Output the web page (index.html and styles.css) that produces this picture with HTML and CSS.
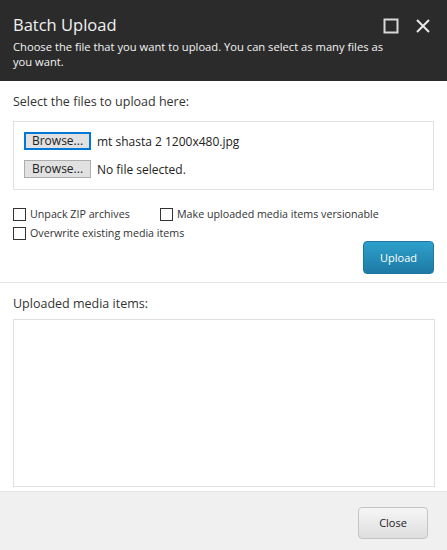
FILE: index.html
```html
<!DOCTYPE html>
<html>
<head>
<meta charset="utf-8">
<link rel="stylesheet" href="styles.css">
</head>
<body>
<div class="dialog">
  <header class="head">
    <div class="head-text">
      <div class="title">Batch Upload</div>
      <div class="subtitle">Choose the file that you want to upload. You can select as many files as you want.</div>
    </div>
    <div class="head-icons">
      <svg class="ico" width="16" height="16" viewBox="0 0 16 16"><rect x="1.5" y="1.5" width="13" height="13" fill="none" stroke="#d8d8d8" stroke-width="2"/></svg>
      <svg class="ico" width="16" height="16" viewBox="0 0 16 16"><path d="M2 2 L14 14 M14 2 L2 14" stroke="#e8e8e8" stroke-width="2" fill="none"/></svg>
    </div>
  </header>
  <main class="body">
    <div class="label">Select the files to upload here:</div>
    <div class="filebox">
      <div class="filerow"><span class="browse focused">Browse...</span><span class="fname">mt shasta 2 1200x480.jpg</span></div>
      <div class="filerow"><span class="browse">Browse...</span><span class="fname">No file selected.</span></div>
    </div>
    <div class="opts">
      <div class="optrow">
        <label class="opt opt-first"><span class="cb"></span>Unpack ZIP archives</label>
        <label class="opt"><span class="cb"></span>Make uploaded media items versionable</label>
      </div>
      <div class="optrow">
        <label class="opt"><span class="cb"></span>Overwrite existing media items</label>
      </div>
    </div>
    <div class="uprow"><span class="upload">Upload</span></div>
  </main>
  <section class="results">
    <div class="label">Uploaded media items:</div>
    <div class="listbox"></div>
  </section>
  <footer class="foot"><span class="close">Close</span></footer>
</div>
</body>
</html>
```
FILE: styles.css
```css
* { box-sizing: border-box; }
html, body { margin: 0; padding: 0; }
body {
  width: 447px;
  height: 550px;
  font-family: "Open Sans", "Liberation Sans", sans-serif;
  color: #2f2f2f;
  background: #fff;
  overflow: hidden;
}
.dialog { display: flex; flex-direction: column; height: 550px; }
.head {
  background: #2b2b2b;
  height: 81px;
  display: flex;
  padding: 12px 16px 0 13px;
  color: #fff;
}
.head-text { flex: 1; min-width: 0; }
.title { font-size: 16.5px; line-height: 26px; color: #f2f2f2; }
.subtitle { font-size: 11.2px; line-height: 15px; margin-top: 1px; width: 385px; color: #f4f4f4; }
.head-icons { display: flex; gap: 16px; padding-top: 6px; padding-right: 0; }
.ico { display: block; }
.body { padding: 12px 13px 0 13px; border-bottom: 1px solid #e4e4e4; height: 202px; }
.label { font-size: 12.5px; line-height: 18px; color: #333; }
.filebox {
  margin-top: 10px;
  border: 1px solid #e0e0e0;
  height: 69px;
  padding: 10px 10px 0 10px;
  display: flex;
  flex-direction: column;
  gap: 10px;
}
.filerow { display: flex; align-items: center; height: 18px; font-size: 12px; }
.browse {
  width: 67px;
  height: 18px;
  border: 1px solid #adadad;
  background: #e1e1e1;
  font-size: 12px;
  line-height: 16px;
  text-align: center;
  color: #222;
}
.browse.focused { border: 2px solid #0078d7; line-height: 14px; }
.fname { margin-left: 6px; color: #222; }
.opts { margin-top: 18px; display: flex; flex-direction: column; gap: 6px; }
.optrow { display: flex; }
.opt { display: flex; align-items: center; font-size: 10.7px; line-height: 13px; color: #333; }
.opt-first { width: 147px; }
.cb { width: 13px; height: 13px; border: 1px solid #333; margin-right: 4px; background: #fff; }
.uprow { display: flex; justify-content: flex-end; margin-top: 1px; }
.upload {
  width: 71px;
  height: 33px;
  border-radius: 4px;
  background: linear-gradient(#2da0cb, #1f7aa6);
  border: 1px solid #1e77a2;
  color: #fff;
  font-size: 11px;
  line-height: 31px;
  text-align: center;
}
.results { padding: 12px 12px 0 13px; flex: 1; }
.results .label { line-height: 18px; }
.listbox { margin-top: 6px; border: 1px solid #e0e0e0; height: 168px; }
.foot {
  background: #f0f0f0;
  border-top: 1px solid #e4e4e4;
  height: 59px;
  display: flex;
  justify-content: flex-end;
  padding: 15px 19px 0 0;
}
.close {
  width: 70px;
  height: 32px;
  border-radius: 4px;
  border: 1px solid #c4c4c4;
  background: linear-gradient(#f6f6f6, #dedede);
  font-size: 11px;
  line-height: 30px;
  text-align: center;
  color: #222;
}
```
